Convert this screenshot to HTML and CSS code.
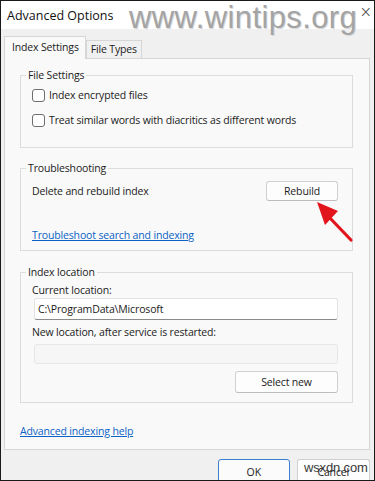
FILE: index.html
```html
<!DOCTYPE html>
<html>
<head>
<meta charset="utf-8">
<link rel="stylesheet" href="styles.css">
</head>
<body>
<div class="window">
  <div class="titlebar">
    <span class="title">Advanced Options</span>
    <span class="close">×</span>
    <span class="watermark">www.wintips.org</span>
  </div>
  <div class="client">
    <div class="tabs">
      <div class="tab active">Index Settings</div>
      <div class="tab">File Types</div>
    </div>
    <div class="panel">
      <fieldset class="group g1">
        <legend>File Settings</legend>
        <label class="check"><span class="box"></span>Index encrypted files</label>
        <label class="check second"><span class="box"></span>Treat similar words with diacritics as different words</label>
      </fieldset>
      <fieldset class="group g2">
        <legend>Troubleshooting</legend>
        <div class="row">
          <span>Delete and rebuild index</span>
          <span class="btn rebuild">Rebuild</span>
        </div>
        <a class="link ts">Troubleshoot search and indexing</a>
        <svg class="arrow" width="44" height="48" viewBox="0 0 44 48">
          <line x1="36" y1="41" x2="14" y2="18" stroke="#e3151c" stroke-width="3.2" stroke-linecap="round"/>
          <polygon points="2,3 23,12 10,26" fill="#e3151c"/>
        </svg>
      </fieldset>
      <fieldset class="group g3">
        <legend>Index location</legend>
        <div class="lbl">Current location:</div>
        <div class="input">C:\ProgramData\Microsoft</div>
        <div class="lbl lbl2">New location, after service is restarted:</div>
        <div class="input disabled"></div>
        <div class="btnrow"><span class="btn select">Select new</span></div>
      </fieldset>
      <a class="link help">Advanced indexing help</a>
    </div>
    <div class="footer">
      <span class="btn ok">OK</span>
      <span class="btn cancel">Cancel</span>
      <span class="wm2">wsxdn.com</span>
    </div>
  </div>
</div>
</body>
</html>
```
FILE: styles.css
```css
* { box-sizing: border-box; }
html, body { margin: 0; padding: 0; background: #fff; }
body {
  font-family: "Open Sans", "Noto Sans", sans-serif;
  font-size: 10.5px;
  letter-spacing: -0.15px;
  color: #1b1b1b;
}
.window {
  width: 375px;
  height: 481px;
  border: 1px solid #1a1a1a;
  display: flex;
  flex-direction: column;
  overflow: hidden;
  position: relative;
}
.titlebar {
  height: 28px;
  background: #fff;
  display: flex;
  align-items: center;
  padding-left: 6px;
  position: relative;
  flex: none;
}
.title { font-size: 12.5px; letter-spacing: 0; color: #111; }
.close {
  margin-left: auto;
  margin-right: 2px;
  font-size: 15px;
  line-height: 1;
  color: #333;
  font-family: "DejaVu Sans", sans-serif;
  font-weight: 300;
  position: relative;
  top: -3px;
  z-index: 1;
}
.watermark {
  position: absolute;
  left: 128px;
  top: 1px;
  line-height: 31px;
  font-family: "Liberation Sans", Arial, sans-serif;
  font-size: 31px;
  letter-spacing: 0.4px;
  color: #a4a4a4;
  text-shadow: 1px 1px 0 #d8d8d8;
}
.client {
  flex: 1;
  background: #f0f0f0;
  padding: 6px 4px 0 3px;
  display: flex;
  flex-direction: column;
}
.tabs { display: flex; align-items: flex-end; height: 23px; }
.tab {
  border: 1px solid #d6d6d6;
  border-bottom: none;
  padding: 0 4px;
  height: 18px;
  line-height: 17px;
  background: #f0f0f0;
}
.tab.active {
  height: 23px;
  line-height: 21px;
  background: #f9f9f9;
  padding: 0 6px 0 7px;
  margin-bottom: -1px;
  position: relative;
  z-index: 1;
}
.panel {
  height: 392px;
  border: 1px solid #d6d6d6;
  background: #f9f9f9;
  padding: 8px 16px 0 15px;
  display: flex;
  flex-direction: column;
}
.group {
  margin: 0;
  border: 1px solid #dcdcdc;
  padding: 0 14px 0 11px;
  min-width: 0;
}
.group legend {
  padding: 0 2px;
  margin-left: -6px;
  line-height: 16px;
  color: #1b1b1b;
}
.g1 { padding-top: 4px; padding-bottom: 19px; }
.check { display: flex; align-items: center; height: 16px; }
.check.second { margin-top: 9px; }
.box {
  width: 13px; height: 13px;
  border: 1px solid #6e6e6e;
  border-radius: 3px;
  background: #fff;
  margin-right: 4px;
  flex: none;
}
.g2 { margin-top: 12px; padding-top: 5px; padding-bottom: 7px; position: relative; }
.row { display: flex; align-items: center; justify-content: space-between; height: 20px; }
.btn {
  display: flex;
  align-items: center;
  justify-content: center;
  background: #fdfdfd;
  border: 1px solid #d0d0d0;
  border-bottom-color: #bdbdbd;
  border-radius: 3px;
  color: #1b1b1b;
}
.rebuild { width: 72px; height: 20px; }
.link {
  color: #0a62c5;
  text-decoration: underline;
  line-height: 16px;
  display: block;
}
.ts { margin-top: 26px; }
.arrow { position: absolute; left: 294px; top: 23px; }
.g3 { margin-top: 13px; padding-top: 3px; padding-bottom: 9px; }
.lbl { line-height: 15px; }
.input {
  margin-left: 2px;
  height: 22px;
  background: #fff;
  border: 1px solid #e3e3e3;
  border-bottom: 1px solid #8a8a8a;
  border-radius: 3px;
  padding-left: 3px;
  line-height: 20px;
  margin-top: 0;
}
.lbl2 { margin-top: 4px; line-height: 16px; }
.input.disabled {
  height: 20px;
  background: #f6f6f6;
  border: 1px solid #e6e6e6;
  margin-top: 4px;
}
.btnrow { display: flex; justify-content: flex-end; margin-top: 7px; }
.select { width: 103px; height: 22px; }
.help { margin-top: 20px; }
.footer {
  flex: 1;
  display: flex;
  align-items: flex-start;
  padding-top: 9px;
  padding-left: 214px;
  position: relative;
}
.ok {
  width: 74px; height: 26px;
  border: 1px solid #3a7fcf;
  border-radius: 3px;
  background: #fbfbfb;
}
.cancel {
  width: 76px; height: 26px;
  margin-left: 7px;
}
.wm2 {
  position: absolute;
  left: 300px;
  top: 10px;
  font-family: "Liberation Sans", Arial, sans-serif;
  font-size: 13px;
  color: #3a3a3a;
}
```
